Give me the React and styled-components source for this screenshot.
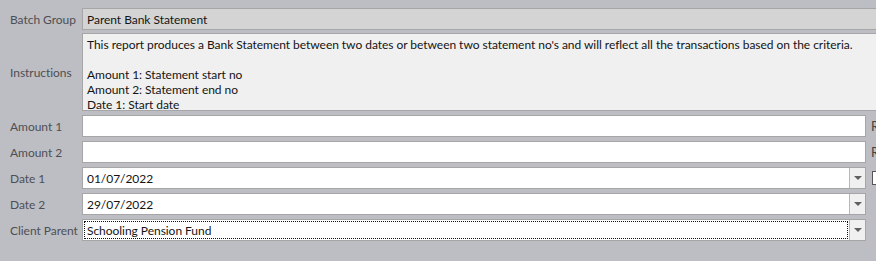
import styled, { createGlobalStyle } from "styled-components";

const GlobalStyle = createGlobalStyle`
  html, body {
    margin: 0;
    padding: 0;
    background: #bdbec3;
  }
  * { box-sizing: border-box; }
`;

const Page = styled.div`
  width: 876px;
  height: 261px;
  overflow: hidden;
  background: #bdbec3;
  font-family: Lato, "Noto Sans", sans-serif;
  font-size: 12px;
  letter-spacing: -0.04px;
  padding-top: 8px;
`;

const Form = styled.div`
  display: flex;
  flex-direction: column;
  gap: 4px;
`;

const Row = styled.div`
  display: flex;
  align-items: center;
  height: ${p => p.h || 22}px;
  margin-top: ${p => p.mt || 0}px;
`;

const Label = styled.div`
  width: 82px;
  flex-shrink: 0;
  padding-left: 10px;
  color: #4e4f55;
  white-space: nowrap;
`;

const Field = styled.div`
  flex: 1;
  height: 100%;
  display: flex;
  align-items: center;
  background: ${p => p.bg || "#ffffff"};
  border: 1px solid #a6a6a6;
  margin-right: ${p => (p.wide ? -4 : 0)}px;
  color: #141414;
  overflow: hidden;
  white-space: nowrap;
`;

const FieldText = styled.span`
  padding-left: 4px;
`;

const Memo = styled(Field)`
  display: block;
  padding: 3px 4px;
  line-height: 15px;
  white-space: pre;
`;

const ComboInput = styled.div`
  flex: 1;
  height: 100%;
  display: flex;
  align-items: center;
  padding: 1px;
`;

const FocusBox = styled.div`
  flex: 1;
  height: 100%;
  display: flex;
  align-items: center;
  padding-left: 2px;
  border: 1px dotted ${p => (p.focused ? "#111" : "transparent")};
`;

const DropButton = styled.div`
  width: 16px;
  height: 100%;
  flex-shrink: 0;
  background: #f0f0f0;
  border-left: 1px solid #b8b8b8;
  display: flex;
  align-items: center;
  justify-content: center;

  &::after {
    content: "";
    border-left: 4px solid transparent;
    border-right: 4px solid transparent;
    border-top: 4px solid #606060;
  }
`;

const Trailing = styled.div`
  width: 10px;
  flex-shrink: 0;
  padding-left: 5px;
  color: #444;
  font-size: 13px;
  display: flex;
  align-items: center;
  overflow: hidden;
`;

const MiniBox = styled.div`
  width: 8px;
  height: 14px;
  background: #fff;
  border: 1px solid #555;
  border-right: none;
  margin-left: 1px;
`;

const instructions = `This report produces a Bank Statement between two dates or between two statement no's and will reflect all the transactions based on the criteria.

Amount 1: Statement start no
Amount 2: Statement end no
Date 1: Start date
Date 2: End date`;

function Combo({ value, focused }) {
  return (
    <Field>
      <ComboInput>
        <FocusBox focused={focused}>{value}</FocusBox>
      </ComboInput>
      <DropButton />
    </Field>
  );
}

export default function App() {
  return (
    <Page>
      <GlobalStyle />
      <Form>
        <Row>
          <Label>Batch Group</Label>
          <Field bg="#d4d4d4" wide>
            <FieldText>Parent Bank Statement</FieldText>
          </Field>
        </Row>
        <Row h={78} mt={-1}>
          <Label>Instructions</Label>
          <Memo bg="#f0f0f0" wide>{instructions}</Memo>
        </Row>
        <Row>
          <Label>Amount 1</Label>
          <Field />
          <Trailing>R</Trailing>
        </Row>
        <Row>
          <Label>Amount 2</Label>
          <Field />
          <Trailing>R</Trailing>
        </Row>
        <Row>
          <Label>Date 1</Label>
          <Combo value="01/07/2022" />
          <Trailing>
            <MiniBox />
          </Trailing>
        </Row>
        <Row>
          <Label>Date 2</Label>
          <Combo value="29/07/2022" />
          <Trailing />
        </Row>
        <Row>
          <Label>Client Parent</Label>
          <Combo value="Schooling Pension Fund" focused />
          <Trailing />
        </Row>
      </Form>
    </Page>
  );
}
